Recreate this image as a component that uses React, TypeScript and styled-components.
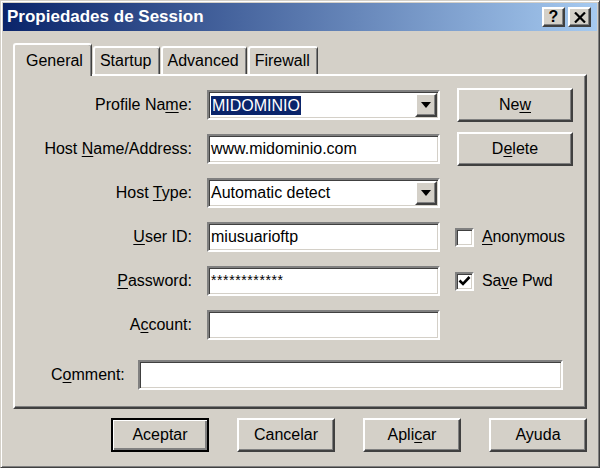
import React from 'react';
import styled, { createGlobalStyle, css } from 'styled-components';

const GlobalStyle = createGlobalStyle`
  html, body {
    margin: 0;
    padding: 0;
    background: #d4d0c8;
  }
  body {
    font-family: "Liberation Sans", Arial, sans-serif;
    font-size: 16px;
    color: #000;
  }
`;

const raised = css`
  background: #d4d0c8;
  border: 2px solid;
  border-color: #fff #404040 #404040 #fff;
  box-shadow: inset -1px -1px #808080;
`;

const sunken = css`
  background: #fff;
  border: 2px solid;
  border-color: #808080 #fff #fff #808080;
  box-shadow: inset 1px 1px #404040, inset -1px -1px #d4d0c8;
`;

const Window = styled.div`
  width: 600px;
  height: 468px;
  box-sizing: border-box;
  background: #d4d0c8;
  border: 1px solid;
  border-color: #d4d0c8 #404040 #404040 #d4d0c8;
  box-shadow: inset 1px 1px #fff, inset -1px -1px #808080;
  padding: 2px;
  display: flex;
  flex-direction: column;
`;

const TitleBar = styled.div`
  height: 28px;
  flex: none;
  display: flex;
  align-items: center;
  padding: 0 6px 0 4px;
  background: linear-gradient(to right, #0a246a, #a6caf0);
`;

const Title = styled.div`
  flex: 1;
  color: #fff;
  font-weight: bold;
  font-size: 17px;
`;

const TitleButtons = styled.div`
  display: flex;
  gap: 3px;
`;

const TitleButton = styled.div`
  ${raised};
  box-sizing: border-box;
  width: 23px;
  height: 20px;
  display: flex;
  align-items: center;
  justify-content: center;
  font-weight: bold;
  font-size: 16px;
  line-height: 1;
`;

const Body = styled.div`
  flex: 1;
  display: flex;
  flex-direction: column;
  padding: 12px 10px 0 10px;
`;

const TabRow = styled.div`
  display: flex;
  align-items: flex-end;
  gap: 1px;
  height: 31px;
`;

const Tab = styled.div<{ $active?: boolean }>`
  box-sizing: border-box;
  position: relative;
  background: #d4d0c8;
  border-top: 2px solid #fff;
  border-left: 2px solid #fff;
  border-right: 1px solid #404040;
  box-shadow: inset -1px 0 #808080;
  border-radius: 3px 3px 0 0;
  display: flex;
  align-items: center;
  height: ${p => (p.$active ? '33px' : '28px')};
  margin-bottom: ${p => (p.$active ? '-2px' : '0')};
  padding: ${p => (p.$active ? '0 8px 0 11px' : '0 7px 0 5px')};
  z-index: ${p => (p.$active ? 1 : 0)};
`;

const Panel = styled.div`
  box-sizing: border-box;
  height: 335px;
  flex: none;
  border: 2px solid;
  border-color: #fff #404040 #404040 #fff;
  box-shadow: inset -1px -1px #808080;
  padding: 14px 0 0 1px;
`;

const FormGrid = styled.div`
  display: grid;
  grid-template-columns: 176px 233px 118px;
  grid-auto-rows: 30px;
  column-gap: 15px;
  row-gap: 14px;
  align-items: center;
`;

const Label = styled.label`
  text-align: right;
  white-space: nowrap;
`;

const Field = styled.div`
  ${sunken};
  box-sizing: border-box;
  height: 30px;
  display: flex;
  align-items: center;
  padding-left: 2px;
  white-space: nowrap;
  overflow: hidden;
`;

const Combo = styled(Field)`
  padding-right: 1px;
`;

const ComboText = styled.div`
  flex: 1;
  display: flex;
  align-items: center;
`;

const Selected = styled.span`
  background: #0a246a;
  color: #fff;
  line-height: 19px;
  padding: 0 1px;
`;

const DropButton = styled.div`
  ${raised};
  box-sizing: border-box;
  width: 22px;
  height: 24px;
  display: flex;
  align-items: center;
  justify-content: center;
`;

const Password = styled.span`
  font-size: 14px;
  letter-spacing: 0.6px;
  align-self: flex-start;
  margin-top: 4px;
`;

const SideButton = styled.button`
  ${raised};
  box-sizing: border-box;
  font: inherit;
  color: #000;
  width: 116px;
  height: 34px;
  justify-self: end;
  padding: 0;
`;

const CheckRow = styled.label`
  display: flex;
  align-items: center;
  gap: 8px;
  white-space: nowrap;
  letter-spacing: -0.2px;
`;

const CheckBox = styled.span`
  ${sunken};
  box-sizing: border-box;
  width: 19px;
  height: 19px;
  display: flex;
  align-items: center;
  justify-content: center;
`;

const CommentRow = styled.div`
  display: flex;
  align-items: center;
  gap: 13px;
  margin-top: 20px;
  padding-left: 35px;
`;

const CommentField = styled(Field)`
  width: 425px;
`;

const ButtonRow = styled.div`
  display: flex;
  justify-content: flex-end;
  gap: 28px;
  margin-top: 9px;
`;

const DialogButton = styled.button<{ $default?: boolean }>`
  ${raised};
  box-sizing: border-box;
  font: inherit;
  color: #000;
  width: 98px;
  height: 34px;
  padding: 0;
  ${p =>
    p.$default &&
    css`
      border: 2px solid #000;
      box-shadow: inset 1px 1px #fff, inset -2px -2px #808080;
    `}
`;

const U = styled.span`
  text-decoration: underline;
  text-underline-offset: 2px;
`;

const DownArrow = () => (
  <svg width="10" height="6" viewBox="0 0 10 6">
    <polygon points="0,0 10,0 5,6" fill="#000" />
  </svg>
);

const CloseIcon = () => (
  <svg width="12" height="11" viewBox="0 0 12 11">
    <path d="M1 0.5 L11 10.5 M11 0.5 L1 10.5" stroke="#000" strokeWidth="2.2" />
  </svg>
);

const CheckMark = () => (
  <svg width="13" height="12" viewBox="0 0 13 12">
    <path d="M1.5 5.5 L5 9 L11.5 2" stroke="#000" strokeWidth="2.6" fill="none" />
  </svg>
);

export default function App() {
  return (
    <>
      <GlobalStyle />
      <Window>
        <TitleBar>
          <Title>Propiedades de Session</Title>
          <TitleButtons>
            <TitleButton>?</TitleButton>
            <TitleButton>
              <CloseIcon />
            </TitleButton>
          </TitleButtons>
        </TitleBar>
        <Body>
          <TabRow>
            <Tab $active>General</Tab>
            <Tab>Startup</Tab>
            <Tab>Advanced</Tab>
            <Tab>Firewall</Tab>
          </TabRow>
          <Panel>
            <FormGrid>
              <Label>
                Profile Na<U>m</U>e:
              </Label>
              <Combo>
                <ComboText>
                  <Selected>MIDOMINIO</Selected>
                </ComboText>
                <DropButton>
                  <DownArrow />
                </DropButton>
              </Combo>
              <SideButton>
                Ne<U>w</U>
              </SideButton>

              <Label>
                Host <U>N</U>ame/Address:
              </Label>
              <Field>www.midominio.com</Field>
              <SideButton>
                D<U>e</U>lete
              </SideButton>

              <Label>
                Host <U>T</U>ype:
              </Label>
              <Combo>
                <ComboText>Automatic detect</ComboText>
                <DropButton>
                  <DownArrow />
                </DropButton>
              </Combo>
              <div />

              <Label>
                <U>U</U>ser ID:
              </Label>
              <Field>miusuarioftp</Field>
              <CheckRow>
                <CheckBox />
                <span>
                  <U>A</U>nonymous
                </span>
              </CheckRow>

              <Label>
                <U>P</U>assword:
              </Label>
              <Field>
                <Password>************</Password>
              </Field>
              <CheckRow>
                <CheckBox>
                  <CheckMark />
                </CheckBox>
                <span>
                  Sa<U>v</U>e Pwd
                </span>
              </CheckRow>

              <Label>
                A<U>c</U>count:
              </Label>
              <Field />
              <div />
            </FormGrid>
            <CommentRow>
              <Label>
                C<U>o</U>mment:
              </Label>
              <CommentField />
            </CommentRow>
          </Panel>
          <ButtonRow>
            <DialogButton $default>Aceptar</DialogButton>
            <DialogButton>Cancelar</DialogButton>
            <DialogButton>
              Apli<U>c</U>ar
            </DialogButton>
            <DialogButton>Ayuda</DialogButton>
          </ButtonRow>
        </Body>
      </Window>
    </>
  );
}
